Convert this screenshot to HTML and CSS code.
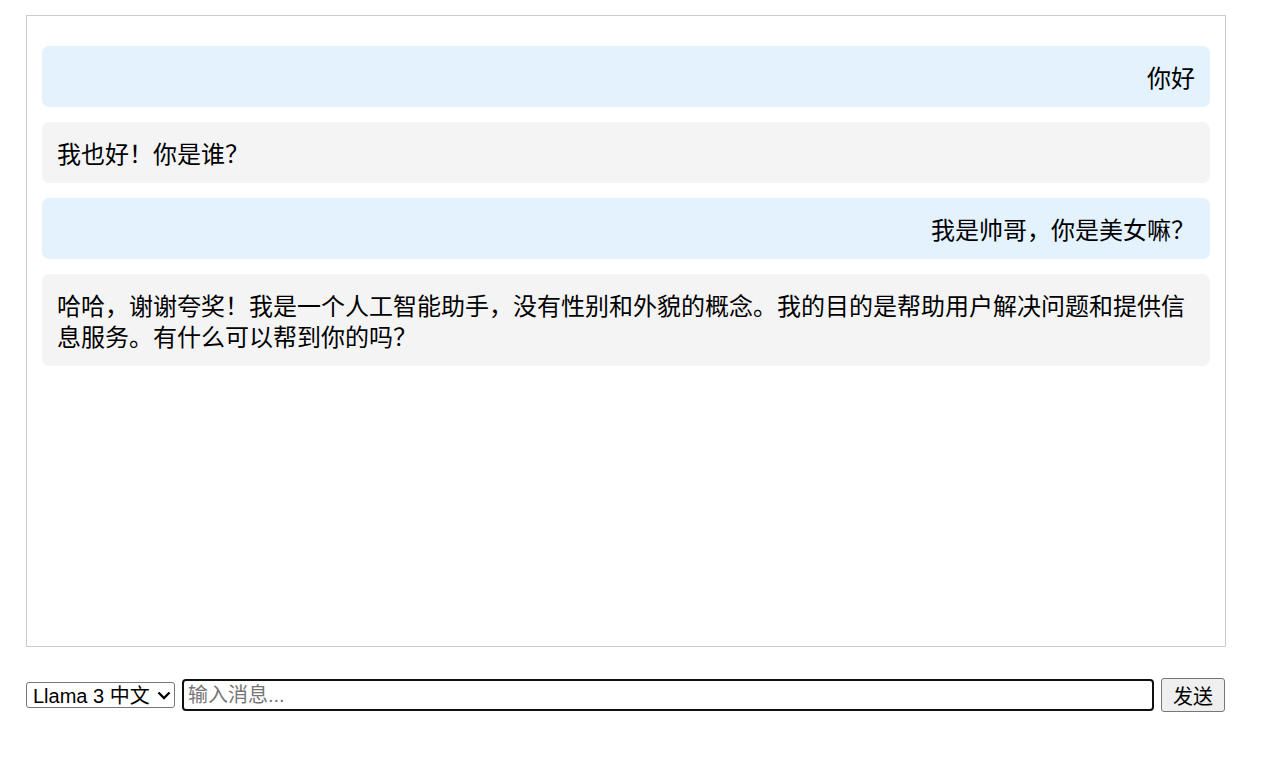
FILE: index.html
```html
<!DOCTYPE html>
<html lang="zh-CN">
<head>
<meta charset="utf-8">
<title>Chat</title>
<link rel="stylesheet" href="styles.css">
</head>
<body>
<div class="chat">
  <div class="msg user">你好</div>
  <div class="msg bot">我也好！你是谁？</div>
  <div class="msg user">我是帅哥，你是美女嘛？</div>
  <div class="msg bot">哈哈，谢谢夸奖！我是一个人工智能助手，没有性别和外貌的概念。我的目的是帮助用户解决问题和提供信息服务。有什么可以帮到你的吗？</div>
</div>
<div class="bar">
  <div class="select-wrap">
    <select class="model">
      <option>Llama 3 中文</option>
    </select>
    <svg class="chev" width="14" height="9" viewBox="0 0 14 9" aria-hidden="true">
      <path d="M1.5 1.5 L7 7 L12.5 1.5" fill="none" stroke="#000" stroke-width="2.3"/>
    </svg>
  </div>
  <input class="entry" type="text" placeholder="输入消息...">
  <button class="send">发送</button>
</div>
</body>
</html>
```

FILE: styles.css
```css
html, body {
  margin: 0;
  background: #ffffff;
}
body {
  padding: 15px 0 0 26px;
  font-family: "Liberation Sans", "Noto Sans CJK SC", sans-serif;
  color: #000;
}
.chat {
  box-sizing: border-box;
  width: 1200px;
  height: 632px;
  border: 1px solid #cccccc;
  padding: 30px 15px 15px;
  display: flex;
  flex-direction: column;
  gap: 15px;
  overflow: hidden;
}
.msg {
  padding: 15px;
  border-radius: 7px;
  font-size: 24px;
  line-height: 31px;
  font-family: "Noto Sans CJK SC", "Liberation Sans", sans-serif;
}
.user {
  background: #e3f2fd;
  text-align: right;
}
.bot {
  background: #f4f4f4;
  text-align: left;
}
.bar {
  width: 1199px;
  margin-top: 31px;
  display: flex;
  align-items: center;
  gap: 7px;
}
.select-wrap {
  position: relative;
  display: flex;
}
.model {
  -webkit-appearance: none;
  appearance: none;
  box-sizing: border-box;
  width: 149px;
  height: 26px;
  font-size: 20px;
  line-height: 24px;
  font-family: "Liberation Sans", "Noto Sans CJK SC", sans-serif;
  color: #000;
  background: #fff;
  border: 1px solid #767676;
  border-radius: 3px;
  padding: 1px 0 0 6px;
  margin: 0;
}
.chev {
  position: absolute;
  right: 4px;
  top: 9px;
  pointer-events: none;
}
.entry {
  box-sizing: border-box;
  flex: 1;
  height: 32px;
  font-size: 20px;
  font-family: "Liberation Sans", "Noto Sans CJK SC", sans-serif;
  border: 2px solid #101010;
  border-radius: 4px;
  padding: 0 4px;
  outline: none;
  margin: 0;
}
.entry::placeholder {
  color: #767676;
}
.send {
  box-sizing: border-box;
  width: 64px;
  height: 34px;
  font-size: 20px;
  font-family: "Noto Sans CJK SC", "Liberation Sans", sans-serif;
  background: #efefef;
  border: 1px solid #767676;
  border-radius: 3px;
  padding: 0;
  margin: 0;
  color: #000;
}
```
